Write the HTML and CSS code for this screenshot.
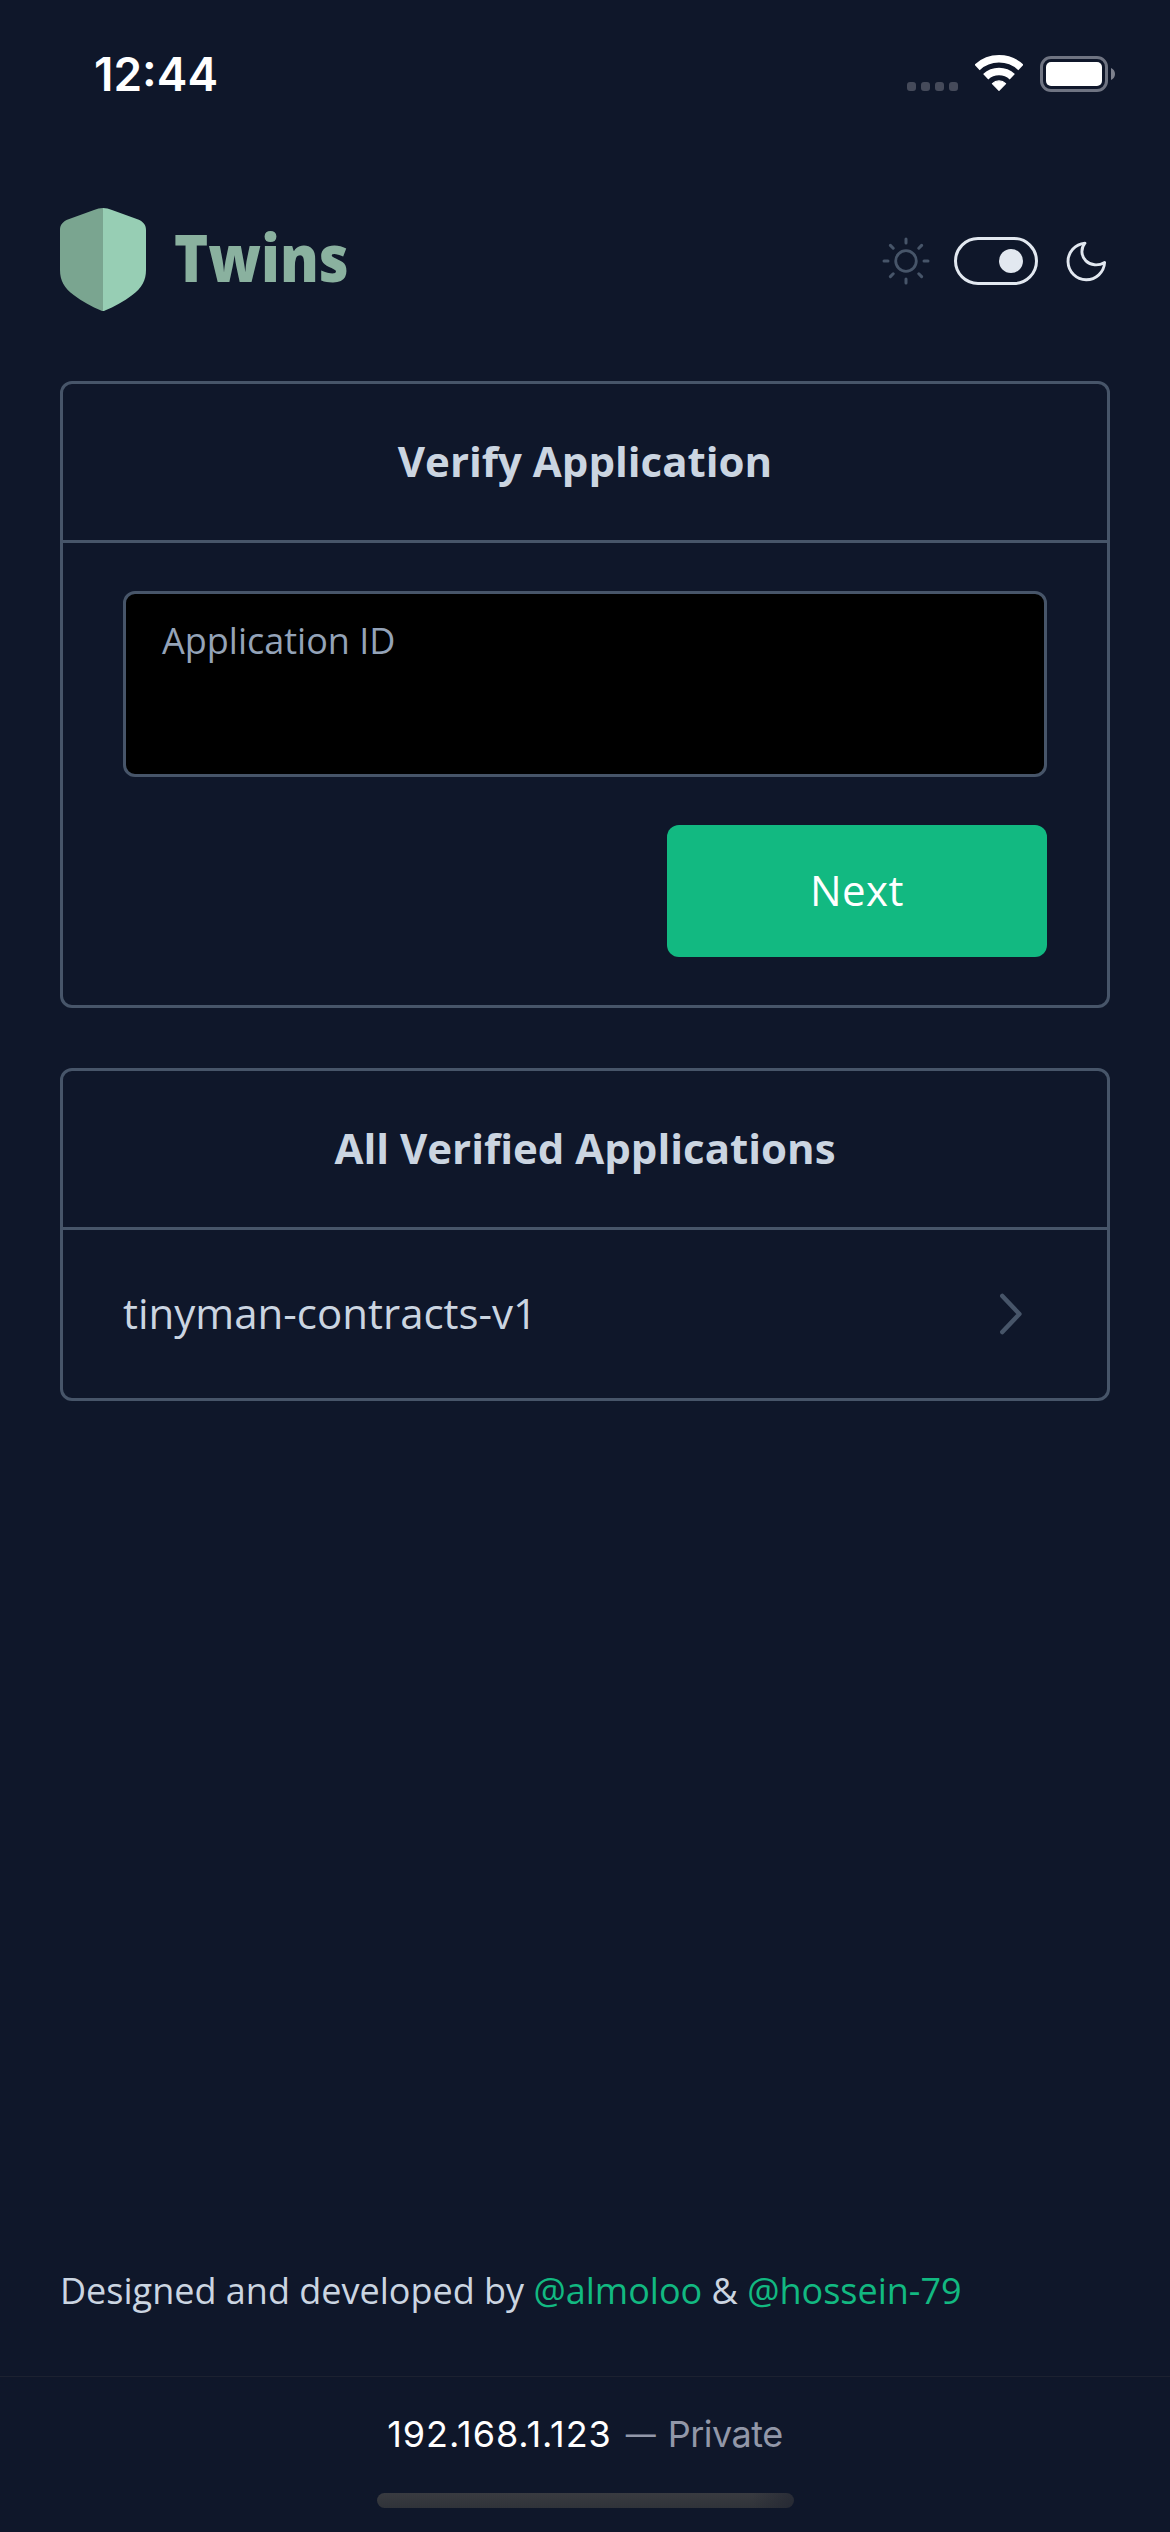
FILE: index.html
```html
<!DOCTYPE html>
<html lang="en">
<head>
<meta charset="utf-8">
<title>Twins</title>
<link rel="stylesheet" href="styles.css">
</head>
<body>
<div class="status">
  <span class="clock">12:44</span>
  <div class="indicators">
    <div class="signal"><i></i><i></i><i></i><i></i></div>
    <svg class="wifi" width="48" height="37" viewBox="-24 -36 48 37">
      <path d="M-21.9 -23.6A32.2 32.2 0 0 1 21.9 -23.6M-13.3 -14.3A19.5 19.5 0 0 1 13.3 -14.3" fill="none" stroke="#fff" stroke-width="7.6"/>
      <path d="M0 -.6L-6.6 -7.4A9.6 9.6 0 0 1 6.6 -7.4Z" fill="#fff" stroke="#fff" stroke-width="1.2" stroke-linejoin="round"/>
    </svg>
    <div class="battery"><div class="cell"><div class="charge"></div></div>
      <svg width="4" height="12" viewBox="0 0 4 12"><path d="M0 0C2.4 1 4 3.2 4 6S2.4 11 0 12Z" fill="#7d818d"/></svg>
    </div>
  </div>
</div>

<header class="top">
  <a class="brand">
    <svg width="86" height="103" viewBox="0 0 86 103">
      <path fill="#7aa590" d="M43 0C40 0 37 .8 34 1.9L8.5 11.3C3 13.3 0 16.8 0 22V62C0 72 4 80 14 87.3C22 93.5 32 98.8 41 102.5Q42 103 43 103Z"/>
      <path fill="#97ceb4" d="M43 0C46 0 49 .8 52 1.9L77.5 11.3C83 13.3 86 16.8 86 22V62C86 72 82 80 72 87.3C64 93.5 54 98.8 45 102.5Q44 103 43 103Z"/>
    </svg>
    <span class="name">Twins</span>
  </a>
  <div class="theme">
    <svg width="48" height="48" viewBox="-24 -24 48 48" fill="none" stroke="#475569" stroke-width="3" stroke-linecap="round">
      <circle r="10.3" stroke-width="2.8"/>
      <path d="M0 -22V-18M0 18V22M-22 0H-18M18 0H22M-15.6 -15.6L-12.8 -12.8M12.8 12.8L15.6 15.6M-15.6 15.6L-12.8 12.8M12.8 -12.8L15.6 -15.6"/>
    </svg>
    <div class="toggle"><div class="knob"></div></div>
    <svg width="48" height="48" viewBox="0 0 48 48" fill="none" stroke="#e2e8f0" stroke-width="2.9" stroke-linejoin="round">
      <path d="M22.9 6.2A18.3 18.3 0 1 0 42.6 25.5C36 29.3 28.6 28.4 23.9 23.9C19 19 18.6 11.5 22.9 6.2Z"/>
    </svg>
  </div>
</header>

<main class="content">
  <section class="card">
    <h2 class="title">Verify Application</h2>
    <form class="form">
      <div class="field">Application ID</div>
      <button class="next" type="button">Next</button>
    </form>
  </section>
  <section class="card">
    <h2 class="title">All Verified Applications</h2>
    <a class="row">
      <span class="label">tinyman-contracts-v1</span>
      <svg width="60" height="60" viewBox="0 0 60 60" fill="none" stroke="#475569" stroke-width="4.5" stroke-linecap="round" stroke-linejoin="round"><path d="M15.3 12L32.4 30L15.3 48"/></svg>
    </a>
  </section>
</main>

<footer class="credits">Designed and developed by <a>@almoloo</a> &amp; <a>@hossein-79</a></footer>

<div class="browser">
  <div class="address"><span class="host">192.168.1.123</span><span class="dash">—</span><span class="mode">Private</span></div>
  <div class="home"></div>
</div>
</body>
</html>
```
FILE: styles.css
```css
* { box-sizing: border-box; }
body {
  margin: 0;
  width: 1170px;
  height: 2532px;
  display: flex;
  flex-direction: column;
  background: #0f172a;
  color: #cbd5e1;
  font-family: "Open Sans", sans-serif;
  font-size: 42px;
}
svg { display: block; flex: none; }

.status {
  height: 208px;
  padding: 46px 55px 0 94px;
  display: flex;
  justify-content: space-between;
  align-items: flex-start;
}
.clock {
  font: 600 46px/56px Inter, sans-serif;
  color: #fff;
}
.indicators {
  display: flex;
  align-items: flex-end;
  padding-top: 9px;
}
.signal { display: flex; gap: 5px; margin: 0 17px 2px 0; }
.signal i {
  width: 9px;
  height: 9px;
  border-radius: 3px;
  background: #454a5a;
}
.wifi { margin: 0 17px 1px 0; }
.battery { display: flex; align-items: center; gap: 3px; padding-bottom: 1px; }
.cell {
  width: 68px;
  height: 36px;
  padding: 3px;
  border: 3px solid #6f7482;
  border-radius: 11px;
}
.charge { height: 24px; border-radius: 5px; background: #fff; }

.top {
  height: 173px;
  padding: 0 60px;
  display: flex;
  justify-content: space-between;
  align-items: flex-start;
}
.brand { display: flex; align-items: flex-start; gap: 28px; }
.name {
  margin-top: 3px;
  font-size: 66px;
  line-height: 90px;
  font-weight: 800;
  color: #8ab19f;
  transform: scaleX(.879);
  transform-origin: left;
}
.theme { display: flex; align-items: center; gap: 24px; margin-top: 29px; }
.toggle {
  width: 84px;
  height: 48px;
  padding: 9px 12px;
  display: flex;
  justify-content: flex-end;
  border: 3px solid #e2e8f0;
  border-radius: 24px;
}
.knob { width: 24px; height: 24px; border-radius: 50%; background: #e2e8f0; }

.content {
  flex: 1;
  padding: 0 60px;
  display: flex;
  flex-direction: column;
  gap: 60px;
}
.card { border: 3px solid #475569; border-radius: 12px; }
.title {
  margin: 0;
  padding: 47px 0 50px;
  border-bottom: 3px solid #475569;
  font-size: 42px;
  line-height: 59px;
  font-weight: 700;
  text-align: center;
}
.form {
  padding: 48px 60px;
  display: flex;
  flex-direction: column;
  align-items: flex-end;
  gap: 48px;
}
.field {
  width: 100%;
  height: 186px;
  padding: 22px 36px;
  border: 3px solid #475569;
  border-radius: 12px;
  background: #000;
  color: #94a3b8;
  font-size: 36px;
  line-height: 49px;
}
.next {
  width: 380px;
  height: 132px;
  padding: 36px 0 39px;
  border: 0;
  border-radius: 12px;
  background: #12b981;
  color: #fff;
  font: 400 42px/57px "Open Sans", sans-serif;
  letter-spacing: .5px;
}
.row {
  height: 168px;
  padding: 0 60px;
  display: flex;
  justify-content: space-between;
  align-items: center;
}
.label { line-height: 57px; margin-bottom: 3px; }

.credits {
  height: 110px;
  padding: 0 60px;
  font-size: 36px;
  line-height: 49px;
}
.credits a { color: #12b981; }

.browser {
  height: 156px;
  padding-top: 35px;
  border-top: 1px solid #1c2130;
  display: flex;
  flex-direction: column;
  align-items: center;
}
.address {
  height: 81px;
  display: flex;
  font: 400 36px/44px Inter, sans-serif;
  color: #9297a8;
}
.host { color: #fff; letter-spacing: .9px; }
.dash { margin: 0 12px 0 14px; font-size: 30px; }
.mode { letter-spacing: -.5px; }
.home {
  width: 417px;
  height: 15px;
  border-radius: 8px;
  background: linear-gradient(90deg, transparent 90%, rgba(31, 35, 48, .6)), linear-gradient(#393b41, #303339);
}
```
